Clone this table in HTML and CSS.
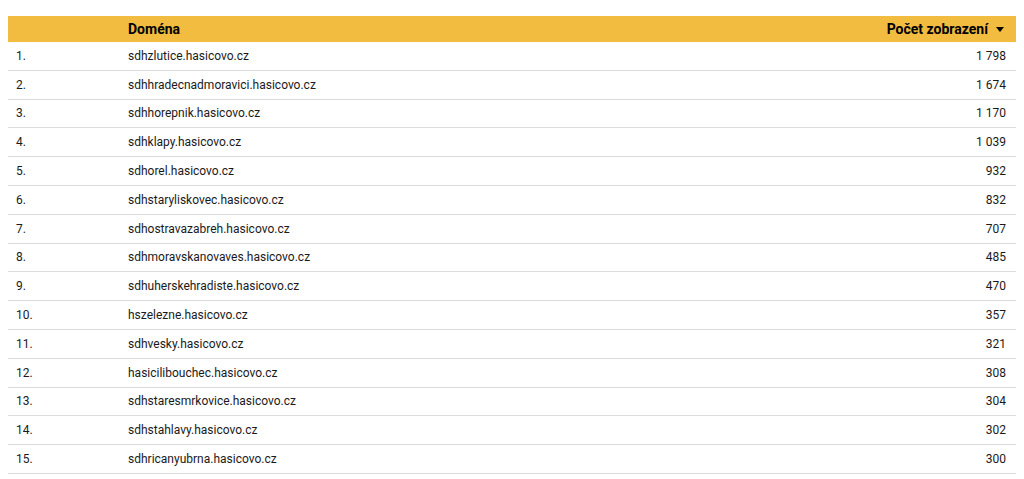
FILE: index.html
```html
<!DOCTYPE html>
<html lang="cs">
<head>
<meta charset="utf-8">
<link rel="stylesheet" href="styles.css">
</head>
<body>
<div class="wrap">
  <div class="table">
    <div class="row head">
      <div class="c-idx"></div>
      <div class="c-dom">Doména</div>
      <div class="c-val">Počet zobrazení <span class="arrow"></span></div>
    </div>
    <div class="row"><div class="c-idx">1.</div><div class="c-dom">sdhzlutice.hasicovo.cz</div><div class="c-val">1 798</div></div>
    <div class="row"><div class="c-idx">2.</div><div class="c-dom">sdhhradecnadmoravici.hasicovo.cz</div><div class="c-val">1 674</div></div>
    <div class="row"><div class="c-idx">3.</div><div class="c-dom">sdhhorepnik.hasicovo.cz</div><div class="c-val">1 170</div></div>
    <div class="row"><div class="c-idx">4.</div><div class="c-dom">sdhklapy.hasicovo.cz</div><div class="c-val">1 039</div></div>
    <div class="row"><div class="c-idx">5.</div><div class="c-dom">sdhorel.hasicovo.cz</div><div class="c-val">932</div></div>
    <div class="row"><div class="c-idx">6.</div><div class="c-dom">sdhstaryliskovec.hasicovo.cz</div><div class="c-val">832</div></div>
    <div class="row"><div class="c-idx">7.</div><div class="c-dom">sdhostravazabreh.hasicovo.cz</div><div class="c-val">707</div></div>
    <div class="row"><div class="c-idx">8.</div><div class="c-dom">sdhmoravskanovaves.hasicovo.cz</div><div class="c-val">485</div></div>
    <div class="row"><div class="c-idx">9.</div><div class="c-dom">sdhuherskehradiste.hasicovo.cz</div><div class="c-val">470</div></div>
    <div class="row"><div class="c-idx">10.</div><div class="c-dom">hszelezne.hasicovo.cz</div><div class="c-val">357</div></div>
    <div class="row"><div class="c-idx">11.</div><div class="c-dom">sdhvesky.hasicovo.cz</div><div class="c-val">321</div></div>
    <div class="row"><div class="c-idx">12.</div><div class="c-dom">hasicilibouchec.hasicovo.cz</div><div class="c-val">308</div></div>
    <div class="row"><div class="c-idx">13.</div><div class="c-dom">sdhstaresmrkovice.hasicovo.cz</div><div class="c-val">304</div></div>
    <div class="row"><div class="c-idx">14.</div><div class="c-dom">sdhstahlavy.hasicovo.cz</div><div class="c-val">302</div></div>
    <div class="row"><div class="c-idx">15.</div><div class="c-dom">sdhricanyubrna.hasicovo.cz</div><div class="c-val">300</div></div>
  </div>
</div>
</body>
</html>
```

FILE: styles.css
```css
html, body {
  margin: 0;
  padding: 0;
  background: #ffffff;
}
body {
  font-family: Roboto, "Liberation Sans", sans-serif;
  font-size: 12px;
  color: #1a1a1a;
}
.wrap {
  padding: 16px 8px 0 8px;
}
.table {
  display: flex;
  flex-direction: column;
}
.row {
  display: grid;
  grid-template-columns: 120px 1fr auto;
  align-items: center;
  height: 28.8px;
  flex: none;
  box-sizing: border-box;
  border-bottom: 1px solid #dcdcdc;
}
.row.head {
  height: 26px;
  background: #f1bc40;
  border-bottom: none;
  font-weight: 700;
  font-size: 14px;
  color: #000000;
}
.c-idx {
  padding-left: 8px;
}
.c-val {
  padding-right: 10px;
  text-align: right;
  display: flex;
  align-items: center;
  justify-content: flex-end;
}
.head .c-val {
  padding-right: 12px;
}
.arrow {
  display: inline-block;
  width: 0;
  height: 0;
  margin-left: 8px;
  border-left: 4px solid transparent;
  border-right: 4px solid transparent;
  border-top: 5px solid #000;
}
```
